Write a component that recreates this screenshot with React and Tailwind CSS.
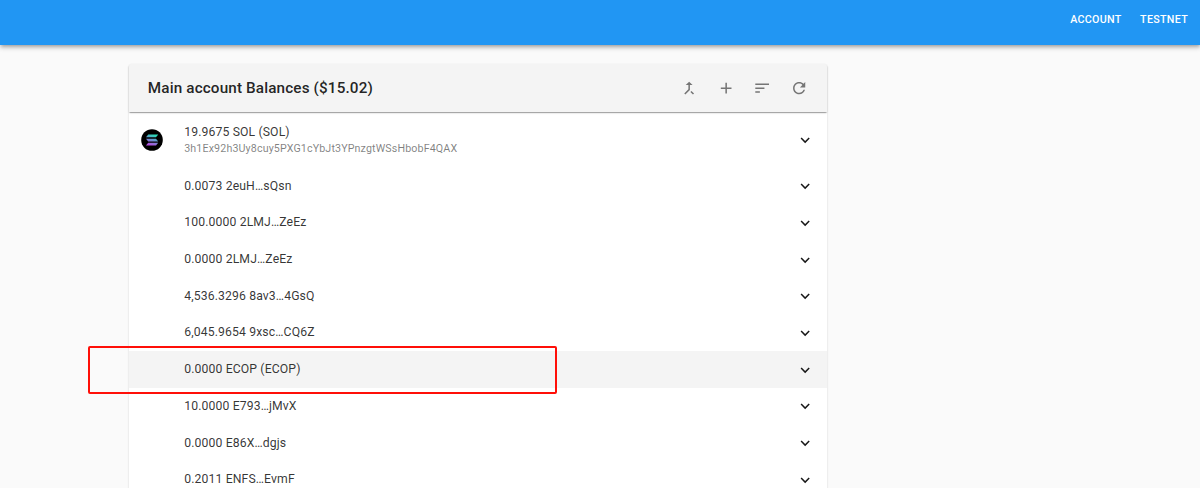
const ICONS = {
  merge:
    "M17 20.41L18.41 19 15 15.59 13.59 17 17 20.41zM7.5 8H11v5.59L5.59 19 7 20.41l6-6V8h3.5L12 3.5 7.5 8z",
  add: "M19 13h-6v6h-2v-6H5v-2h6V5h2v6h6v2z",
  sort: "M3 18h6v-2H3v2zM3 6v2h18V6H3zm0 7h12v-2H3v2z",
  refresh:
    "M17.65 6.35C16.2 4.9 14.21 4 12 4c-4.42 0-7.99 3.58-7.99 8s3.57 8 7.99 8c3.73 0 6.84-2.55 7.73-6h-2.08c-.82 2.33-3.04 4-5.65 4-3.31 0-6-2.69-6-6s2.69-6 6-6c1.66 0 3.14.69 4.22 1.78L13 11h7V4l-2.35 2.35z",
  expand: "M16.59 8.59L12 13.17 7.41 8.59 6 10l6 6 6-6z",
};

const BALANCES = [
  "0.0073 2euH…sQsn",
  "100.0000 2LMJ…ZeEz",
  "0.0000 2LMJ…ZeEz",
  "4,536.3296 8av3…4GsQ",
  "6,045.9654 9xsc…CQ6Z",
  "0.0000 ECOP (ECOP)",
  "10.0000 E793…jMvX",
  "0.0000 E86X…dgjs",
  "0.2011 ENFS…EvmF",
];

function Icon({ name }) {
  return (
    <svg viewBox="0 0 24 24" className="size-[18.3px] shrink-0 fill-current">
      <path d={ICONS[name]} />
    </svg>
  );
}

function SolanaLogo() {
  return (
    <svg viewBox="0 0 22 22" className="size-[22px] shrink-0">
      <defs>
        <linearGradient id="sol" gradientUnits="userSpaceOnUse" x1="13" y1="5.5" x2="9" y2="16.5">
          <stop offset="0" stopColor="#27dfb5" />
          <stop offset="0.5" stopColor="#6b8fd0" />
          <stop offset="1" stopColor="#b84be0" />
        </linearGradient>
      </defs>
      <circle cx="11" cy="11" r="10.8" fill="#000" />
      <g fill="url(#sol)">
        <path d="M7.2 5.6H17.2L15 8.3H5z" />
        <path d="M5 9.7H15L17.2 12.4H7.2z" />
        <path d="M7.2 13.8H17.2L15 16.5H5z" />
      </g>
    </svg>
  );
}

export default function App() {
  return (
    <div className="relative h-[488px] overflow-hidden bg-[#fafafa] font-[Roboto,sans-serif] text-[12.22px] tracking-[0.125px] text-black/80">
      <header className="flex h-[45px] items-center justify-end gap-[18.5px] bg-[#2196f3] pr-3 pb-[4px] text-[10.7px] font-medium tracking-[0.306px] text-white shadow-[0_1.5px_3px_-0.5px_rgba(0,0,0,0.2),0_3px_4px_rgba(0,0,0,0.14),0_1px_7.5px_rgba(0,0,0,0.12)]">
        <button>ACCOUNT</button>
        <button>TESTNET</button>
      </header>

      <main className="mt-[19px] ml-[129px] h-[500px] w-[698px] rounded-t-[3px] bg-white shadow-[0_1.5px_1px_-1px_rgba(0,0,0,0.2),0_1px_1px_rgba(0,0,0,0.14),0_1px_2.3px_rgba(0,0,0,0.12)]">
        <div className="relative flex h-[48px] items-center rounded-t-[3px] bg-[#f4f4f4] pr-[18.7px] pl-[18.8px] shadow-[0_1.5px_1px_-1px_rgba(0,0,0,0.2),0_1px_1px_rgba(0,0,0,0.14),0_1px_2.3px_rgba(0,0,0,0.12)]">
          <h1 className="flex-1 text-[15.28px] font-medium tracking-[0.14px] text-black/87">
            Main account Balances ($15.02)
          </h1>
          <div className="flex gap-[18.4px] text-[#757575]">
            <Icon name="merge" />
            <Icon name="add" />
            <Icon name="sort" />
            <Icon name="refresh" />
          </div>
        </div>

        <ul>
          <li className="flex h-[55.5px] items-center pr-[12.8px] pl-[12.2px]">
            <SolanaLogo />
            <div className="ml-[21px] flex-1">
              <div className="leading-[18.3px]">19.9675 SOL (SOL)</div>
              <div className="text-[10.69px] leading-[15.3px] tracking-[0.13px] text-black/50">
                3h1Ex92h3Uy8cuy5PXG1cYbJt3YPnzgtWSsHbobF4QAX
              </div>
            </div>
            <span className="flex text-black/90">
              <Icon name="expand" />
            </span>
          </li>
          {BALANCES.map((label, i) => (
            <li
              key={label}
              className={`flex h-[36.7px] items-center pr-[12.8px] pl-[55.2px] ${i === 5 ? "bg-[#f4f4f4]" : ""}`}
            >
              <span className="flex-1 leading-[18.3px]">{label}</span>
              <span className="flex pt-px text-black/90">
                <Icon name="expand" />
              </span>
            </li>
          ))}
        </ul>
      </main>

      <div className="absolute top-[346px] left-[88px] h-[48px] w-[469px] rounded-[2px] border-2 border-[#ff0f08]" />
    </div>
  );
}
